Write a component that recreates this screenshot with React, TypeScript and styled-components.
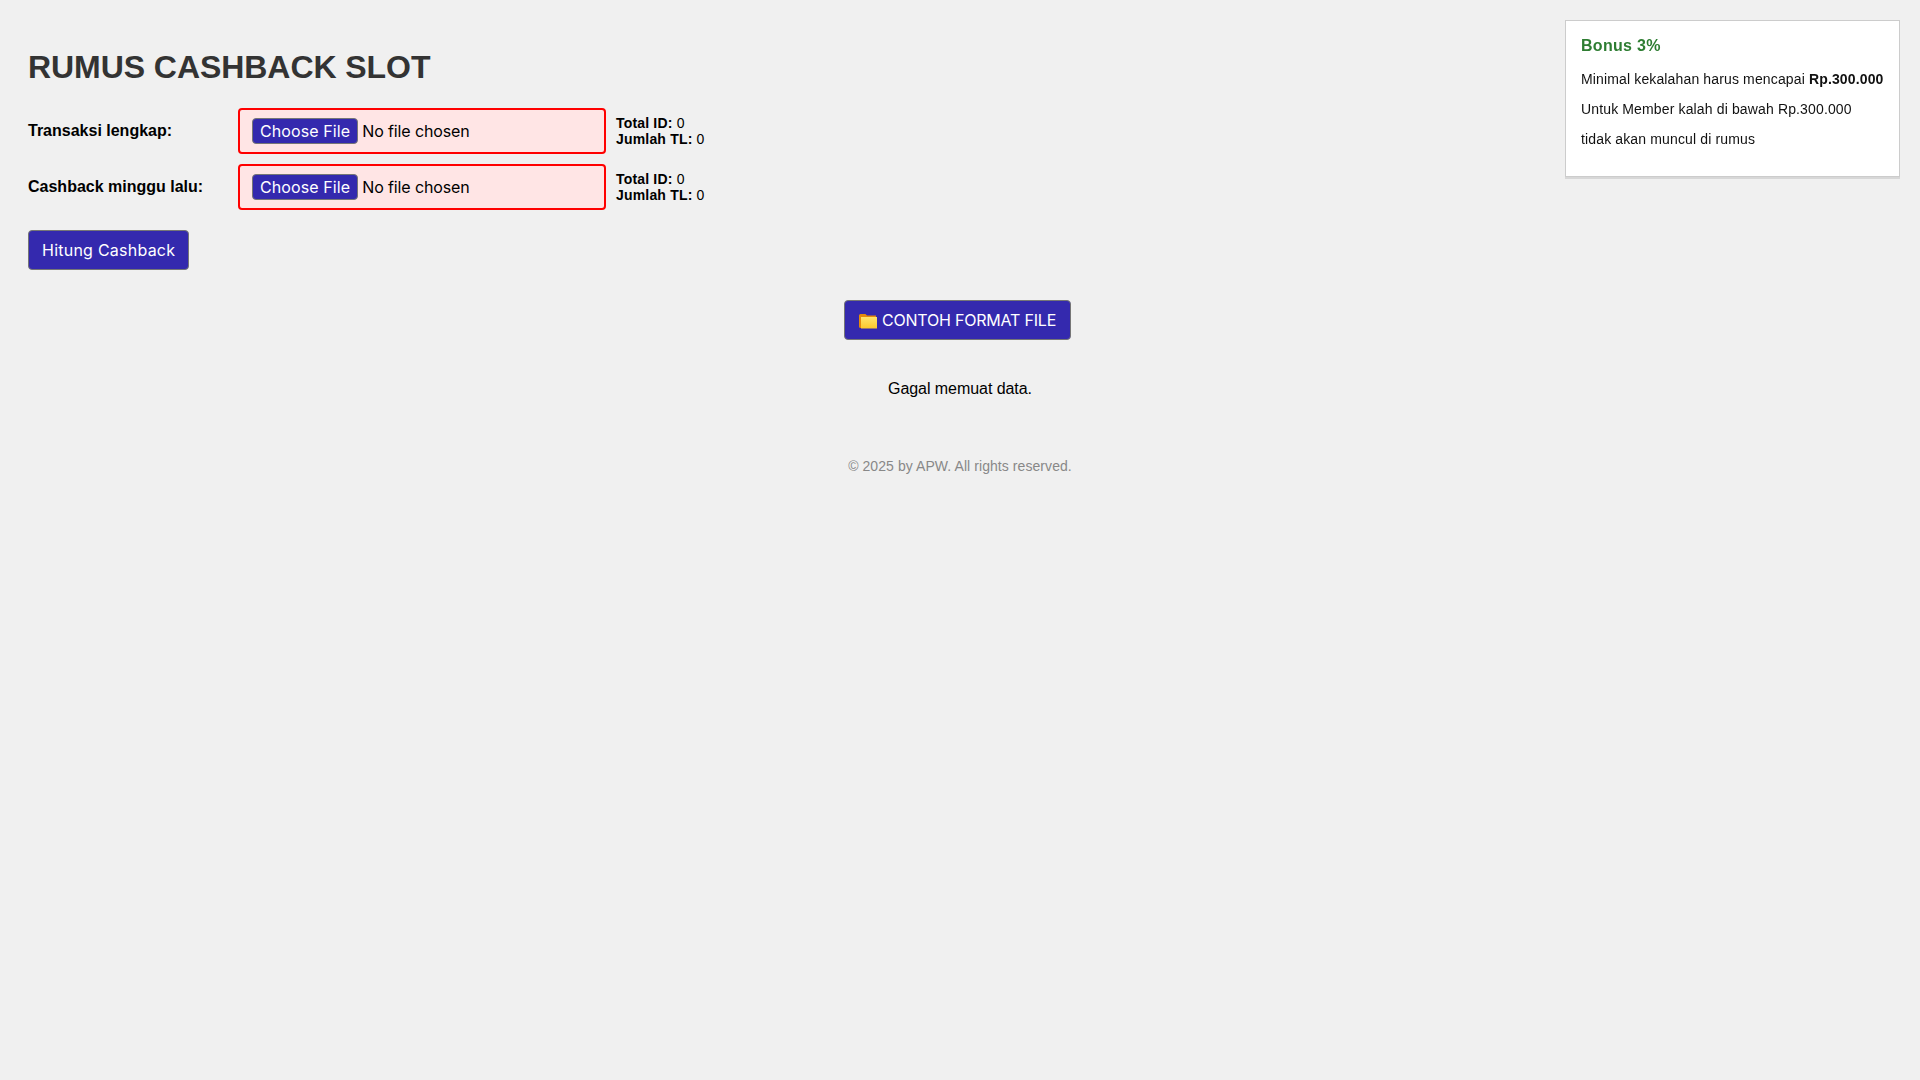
import React from "react"
import styled, { createGlobalStyle } from "styled-components"

const GlobalStyle = createGlobalStyle`
  html, body {
    margin: 0;
    background: #f0f0f0;
  }

  body {
    font-family: Arial, sans-serif;
    color: #000;
  }
`

const Page = styled.div`
  padding: 8px 28px 0;
  min-height: 100vh;
  box-sizing: border-box;
  display: flow-root;
`

const Title = styled.h1`
  font-size: 32px;
  font-weight: bold;
  line-height: 37px;
  letter-spacing: -0.06px;
  color: #333;
  margin: 41px 0 22px;
`

const UploadRow = styled.div`
  display: flex;
  align-items: center;
  margin-bottom: 10px;
`

const FieldLabel = styled.label`
  width: 210px;
  font-size: 16px;
  font-weight: bold;
`

const FileInput = styled.input`
  width: 368px;
  height: 46px;
  box-sizing: border-box;
  padding: 8px 12px;
  border: 2px solid #ff0000;
  border-radius: 4px;
  background: #ffe5e5;
  font-family: Inter, sans-serif;
  font-size: 16px;
  letter-spacing: -0.12px;
  color: #000;

  &::file-selector-button {
    height: 26px;
    margin-right: 4px;
    padding: 0 7px;
    border: 1px solid #767676;
    border-radius: 4px;
    background: #3429ae;
    color: #fff;
    font-family: Inter, sans-serif;
    font-size: 16px;
    letter-spacing: 0.1px;
  }
`

const Stats = styled.div`
  margin-left: 10px;
  font-size: 14px;
  line-height: 16px;
  letter-spacing: 0.18px;
`

const ActionButton = styled.button`
  height: 40px;
  padding: 0 14px;
  border: 1px solid #767676;
  border-radius: 4px;
  background: #3429ae;
  color: #fff;
  font-family: Inter, sans-serif;
  font-size: 16px;
  font-weight: 400;
`

const CalcButton = styled(ActionButton)`
  display: block;
  margin-top: 20px;
  padding: 0 13px;
  letter-spacing: 0.24px;
`

const Center = styled.div`
  text-align: center;
`

const SampleButton = styled(ActionButton)`
  margin: 30px 5px 0 0;
  letter-spacing: -0.2px;
`

const FolderIcon = styled.svg`
  width: 18px;
  height: 16px;
  margin-right: 5px;
  vertical-align: -3px;
`

const StatusText = styled.p`
  text-align: center;
  font-size: 16px;
  line-height: 18px;
  letter-spacing: -0.06px;
  margin: 40px 0 0;
`

const Footer = styled.footer`
  text-align: center;
  font-size: 14px;
  line-height: 16px;
  letter-spacing: 0.07px;
  color: #888;
  margin-top: 60px;
`

const BonusCard = styled.aside`
  position: fixed;
  top: 20px;
  right: 20px;
  width: 335px;
  height: 157px;
  box-sizing: border-box;
  padding: 15px;
  background: #fff;
  border: 1px solid #ccc;
  box-shadow: 0 2px 0 rgba(0, 0, 0, 0.1);
  font-size: 14px;
  line-height: 16px;
  letter-spacing: 0.14px;
  color: #111;
`

const BonusTitle = styled.h3`
  font-size: 16px;
  line-height: 20px;
  font-weight: bold;
  letter-spacing: 0.3px;
  color: #2e7d32;
  margin: 0 0 15px;
`

const BonusLine = styled.p`
  margin: 0 0 14px;
`

const uploads = ["Transaksi lengkap:", "Cashback minggu lalu:"]

const App = () => {
  return (
    <Page>
      <GlobalStyle />
      <Title>RUMUS CASHBACK SLOT</Title>
      {uploads.map(label => (
        <UploadRow key={label}>
          <FieldLabel>{label}</FieldLabel>
          <FileInput type="file" />
          <Stats>
            <b>Total ID:</b> 0
            <br />
            <b>Jumlah TL:</b> 0
          </Stats>
        </UploadRow>
      ))}
      <CalcButton>Hitung Cashback</CalcButton>
      <Center>
        <SampleButton>
          <FolderIcon viewBox="0 0 18 16">
            <defs>
              <linearGradient id="folderFront" x1="0" y1="0" x2="0" y2="1">
                <stop offset="0" stopColor="#ffe46b" />
                <stop offset="1" stopColor="#fdc92b" />
              </linearGradient>
            </defs>
            <path d="M0 2.5Q0 1 1.5 1H6.5L8 2.5H17V15H1.5Q0 15 0 13.5Z" fill="#e58a0c" />
            <path d="M2 4H18V15.5H2Z" fill="url(#folderFront)" />
          </FolderIcon>
          CONTOH FORMAT FILE
        </SampleButton>
      </Center>
      <StatusText>Gagal memuat data.</StatusText>
      <Footer>© 2025 by APW. All rights reserved.</Footer>
      <BonusCard>
        <BonusTitle>Bonus 3%</BonusTitle>
        <BonusLine>
          Minimal kekalahan harus mencapai <b>Rp.300.000</b>
        </BonusLine>
        <BonusLine>Untuk Member kalah di bawah Rp.300.000</BonusLine>
        <BonusLine>tidak akan muncul di rumus</BonusLine>
      </BonusCard>
    </Page>
  )
}

export default App
